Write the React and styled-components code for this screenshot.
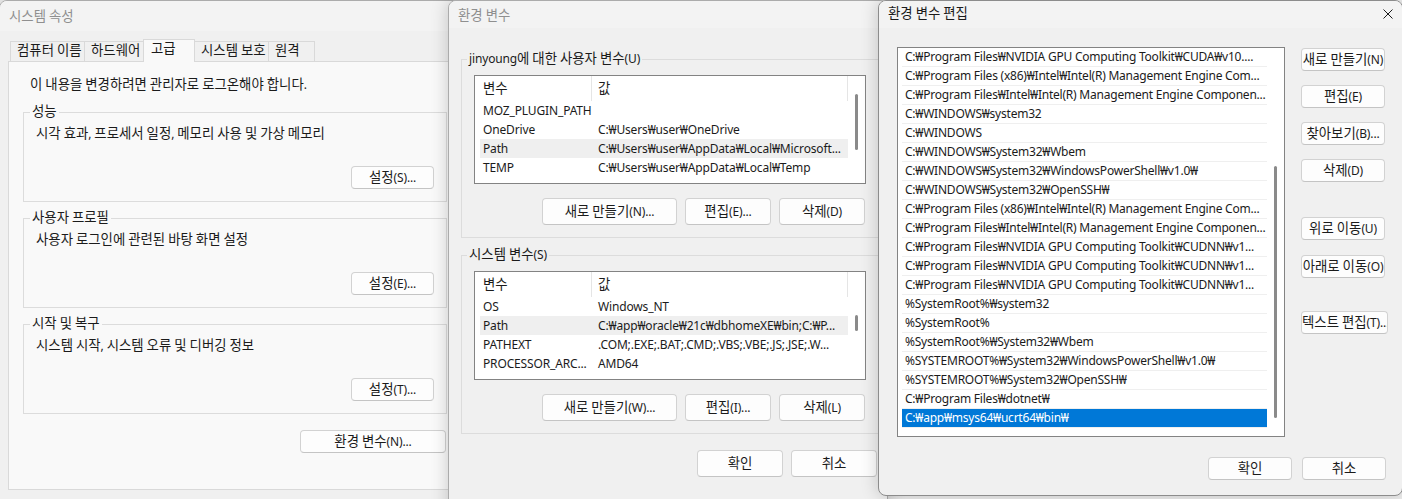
import styled, { createGlobalStyle } from "styled-components";

const GlobalStyle = createGlobalStyle`
  * { box-sizing: border-box; }
  body {
    margin: 0;
    background: #efefef;
    overflow: hidden;
    font-family: "Noto Sans", "Noto Sans CJK KR", sans-serif;
    font-size: 12px;
    letter-spacing: -0.15px;
    color: #1b1b1b;
  }
`;

// Malgun Gothic draws Hangul a bit larger than its Latin letters
const Hangul = styled.span`
  font-family: "Noto Sans CJK KR", sans-serif;
  font-size: 13.4px;
  line-height: 0;
  letter-spacing: 0;
`;

const ko = (text) =>
  text
    .split(/([\uAC00-\uD7A3]+(?:\s+[\uAC00-\uD7A3]+)*)/)
    .map((part, i) => (i % 2 ? <Hangul key={i}>{part}</Hangul> : part));

const Desktop = styled.div`
  position: relative;
  width: 1402px;
  height: 499px;
  overflow: hidden;
`;

const Window = styled.div`
  position: absolute;
  left: ${(p) => p.$x}px;
  top: 0;
  width: ${(p) => p.$w}px;
  height: ${(p) => p.$h}px;
  background: #f0f0f0;
  border: 1px solid ${(p) => (p.$active ? "#8c8c8c" : "#ababab")};
  border-radius: 8px;
  box-shadow: 0 0 18px rgba(0, 0, 0, 0.2);
  display: flex;
  flex-direction: column;
  overflow: hidden;
`;

const TitleBar = styled.div`
  flex: none;
  height: ${(p) => p.$h}px;
  display: flex;
  align-items: center;
  justify-content: space-between;
  padding: 0 ${(p) => p.$pr || 0}px 2px 9px;
  background: #f3f3f3;
  line-height: 16px;
  color: ${(p) => (p.$active ? "#1b1b1b" : "#8f8f8f")};
`;

const CloseIcon = () => (
  <svg width="10" height="10" viewBox="0 0 10 10">
    <path d="M0.5 0.5 L9.5 9.5 M9.5 0.5 L0.5 9.5" stroke="#1b1b1b" strokeWidth="1" fill="none" />
  </svg>
);

/* ---------- buttons ---------- */

const Button = styled.button`
  flex: none;
  width: ${(p) => p.$w}px;
  height: ${(p) => p.$h || 23}px;
  margin-top: ${(p) => p.$mt || 0}px;
  padding: 0;
  background: #fdfdfd;
  border: 1px solid #d2d2d2;
  border-bottom-color: #c4c4c4;
  border-radius: 4px;
  font: inherit;
  letter-spacing: inherit;
  line-height: 16px;
  color: #1b1b1b;
  white-space: nowrap;
  overflow: hidden;
`;

const ButtonRow = styled.div`
  display: flex;
  justify-content: flex-end;
  gap: ${(p) => p.$gap || 0}px;
  margin-top: ${(p) => p.$mt || 0}px;
  padding-right: ${(p) => p.$pr || 0}px;
  width: ${(p) => (p.$w ? `${p.$w}px` : "auto")};
`;

/* ---------- system properties ---------- */

const TabStrip = styled.div`
  display: flex;
  align-items: flex-end;
  height: 22px;
  margin-top: 8px;
  padding-left: 10px;
  position: relative;
  z-index: 1;
`;

const Tab = styled.div`
  width: ${(p) => p.$w}px;
  height: ${(p) => (p.$active ? 23 : 20)}px;
  margin-left: -1px;
  margin-bottom: ${(p) => (p.$active ? -1 : 0)}px;
  padding: 1px 0 0 ${(p) => (p.$active ? 7 : 6)}px;
  border: 1px solid #d9d9d9;
  border-bottom: none;
  background: ${(p) => (p.$active ? "#f9f9f9" : "#f0f0f0")};
  line-height: 16px;
  white-space: nowrap;
  &:first-child {
    margin-left: 0;
  }
`;

const TabPanel = styled.div`
  width: 452px;
  height: 429px;
  margin-left: 8px;
  padding: 15px 0 0 14px;
  background: #f9f9f9;
  border: 1px solid #d9d9d9;
`;

const Notice = styled.div`
  padding-left: 7px;
  line-height: 16px;
`;

const Group = styled.fieldset`
  width: ${(p) => p.$w}px;
  min-width: 0;
  margin: ${(p) => p.$mt}px 0 0;
  padding: ${(p) => p.$pad};
  border: 1px solid #dcdcdc;
`;

const Legend = styled.legend`
  padding: 0 2px;
  margin-left: ${(p) => p.$ml}px;
  line-height: 16px;
`;

const GroupText = styled.div`
  line-height: 16px;
`;

/* ---------- environment variables ---------- */

const DialogBody = styled.div`
  padding: ${(p) => p.$pad};
  display: flex;
  flex-direction: ${(p) => p.$dir || "column"};
  gap: ${(p) => p.$gap || 0}px;
`;

const ListView = styled.div`
  width: ${(p) => p.$w}px;
  height: ${(p) => p.$h}px;
  display: flex;
  background: #fff;
  border: 1px solid #838383;
  overflow: hidden;
`;

const ListMain = styled.div`
  flex: 1;
  padding-left: ${(p) => p.$pl}px;
  overflow: hidden;
`;

const ScrollTrack = styled.div`
  flex: none;
  width: 17px;
`;

const ScrollThumb = styled.div`
  width: 3px;
  height: ${(p) => p.$h}px;
  margin: ${(p) => p.$top}px 0 0 7px;
  border-radius: 2px;
  background: #8a8a8a;
`;

const VarGrid = styled.div`
  display: grid;
  grid-template-columns: 112px 1fr;
  height: ${(p) => (p.$header ? 25 : 19)}px;
  line-height: ${(p) => (p.$header ? 25 : 19)}px;
  background: ${(p) => (p.$sel ? "#efefef" : "transparent")};
`;

const VarCell = styled.div`
  padding-left: ${(p) => (p.$value ? 6 : 3)}px;
  white-space: nowrap;
  overflow: hidden;
  border-right: ${(p) => (p.$header ? "1px solid #e5e5e5" : "none")};
`;

/* ---------- edit variable ---------- */

const PathRow = styled.div`
  height: 19px;
  padding-left: 3px;
  line-height: 18px;
  letter-spacing: -0.22px;
  border-bottom: 1px solid #efefef;
  white-space: nowrap;
  overflow: hidden;
  background: ${(p) => (p.$sel ? "#0078d7" : "transparent")};
  color: ${(p) => (p.$sel ? "#fff" : "inherit")};
`;

const SideButtons = styled.div`
  display: flex;
  flex-direction: column;
`;

const userVars = [
  ["MOZ_PLUGIN_PATH", ""],
  ["OneDrive", "C:₩Users₩user₩OneDrive"],
  ["Path", "C:₩Users₩user₩AppData₩Local₩Microsoft...", true],
  ["TEMP", "C:₩Users₩user₩AppData₩Local₩Temp"],
];

const systemVars = [
  ["OS", "Windows_NT"],
  ["Path", "C:₩app₩oracle₩21c₩dbhomeXE₩bin;C:₩P...", true],
  ["PATHEXT", ".COM;.EXE;.BAT;.CMD;.VBS;.VBE;.JS;.JSE;.W..."],
  ["PROCESSOR_ARC...", "AMD64"],
];

const paths = [
  "C:₩Program Files₩NVIDIA GPU Computing Toolkit₩CUDA₩v10....",
  "C:₩Program Files (x86)₩Intel₩Intel(R) Management Engine Com...",
  "C:₩Program Files₩Intel₩Intel(R) Management Engine Componen...",
  "C:₩WINDOWS₩system32",
  "C:₩WINDOWS",
  "C:₩WINDOWS₩System32₩Wbem",
  "C:₩WINDOWS₩System32₩WindowsPowerShell₩v1.0₩",
  "C:₩WINDOWS₩System32₩OpenSSH₩",
  "C:₩Program Files (x86)₩Intel₩Intel(R) Management Engine Com...",
  "C:₩Program Files₩Intel₩Intel(R) Management Engine Componen...",
  "C:₩Program Files₩NVIDIA GPU Computing Toolkit₩CUDNN₩v1...",
  "C:₩Program Files₩NVIDIA GPU Computing Toolkit₩CUDNN₩v1...",
  "C:₩Program Files₩NVIDIA GPU Computing Toolkit₩CUDNN₩v1...",
  "%SystemRoot%₩system32",
  "%SystemRoot%",
  "%SystemRoot%₩System32₩Wbem",
  "%SYSTEMROOT%₩System32₩WindowsPowerShell₩v1.0₩",
  "%SYSTEMROOT%₩System32₩OpenSSH₩",
  "C:₩Program Files₩dotnet₩",
  "C:₩app₩msys64₩ucrt64₩bin₩",
];

const tabs = [
  ["컴퓨터 이름", 75],
  ["하드웨어", 60],
  ["고급", 52, true],
  ["시스템 보호", 75],
  ["원격", 47],
];

const perfGroups = [
  ["성능", "시각 효과, 프로세서 일정, 메모리 사용 및 가상 메모리", "설정(S)...", 11],
  ["사용자 프로필", "사용자 로그인에 관련된 바탕 화면 설정", "설정(E)...", 8],
  ["시작 및 복구", "시스템 시작, 시스템 오류 및 디버깅 정보", "설정(T)...", 8],
];

const sideButtons = [
  ["새로 만들기(N)", 1, 84],
  ["편집(E)", 14, 84],
  ["찾아보기(B)...", 14, 84],
  ["삭제(D)", 14, 84],
  ["위로 이동(U)", 35, 84],
  ["아래로 이동(O)", 15, 84],
  ["텍스트 편집(T)...", 33, 87],
];

const VarList = ({ rows, thumbTop, thumbH }) => (
  <ListView $w={392} $h={109}>
    <ListMain $pl={5}>
      <VarGrid $header>
        <VarCell $header>{ko("변수")}</VarCell>
        <VarCell $header $value>
          {ko("값")}
        </VarCell>
      </VarGrid>
      {rows.map(([name, value, sel]) => (
        <VarGrid key={name} $sel={sel}>
          <VarCell>{name}</VarCell>
          <VarCell $value>{value}</VarCell>
        </VarGrid>
      ))}
    </ListMain>
    <ScrollTrack>
      <ScrollThumb $top={thumbTop} $h={thumbH} />
    </ScrollTrack>
  </ListView>
);

const VarGroup = ({ title, mt, rows, thumbTop, thumbH, labels }) => (
  <Group $w={420} $mt={mt} $pad="8px 14px 12px 12px">
    <Legend $ml={-7}>{ko(title)}</Legend>
    <VarList rows={rows} thumbTop={thumbTop} thumbH={thumbH} />
    <ButtonRow $gap={8} $mt={14} $pr={1}>
      <Button $w={135} $h={27}>
        {ko(labels[0])}
      </Button>
      <Button $w={86} $h={27}>
        {ko(labels[1])}
      </Button>
      <Button $w={86} $h={27}>
        {ko(labels[2])}
      </Button>
    </ButtonRow>
  </Group>
);

export default function App() {
  return (
    <>
      <GlobalStyle />
      <Desktop>
        <Window $x={-1} $w={470} $h={540}>
          <TitleBar $h={30}>{ko("시스템 속성")}</TitleBar>
          <TabStrip>
            {tabs.map(([label, w, active]) => (
              <Tab key={label} $w={w} $active={active}>
                {ko(label)}
              </Tab>
            ))}
          </TabStrip>
          <TabPanel>
            <Notice>{ko("이 내용을 변경하려면 관리자로 로그온해야 합니다.")}</Notice>
            {perfGroups.map(([title, text, btn, mt]) => (
              <Group key={title} $w={424} $mt={mt} $pad="6px 12px 12px">
                <Legend $ml={-6}>{ko(title)}</Legend>
                <GroupText>{ko(text)}</GroupText>
                <ButtonRow $mt={24}>
                  <Button $w={83}>{ko(btn)}</Button>
                </ButtonRow>
              </Group>
            ))}
            <ButtonRow $mt={16} $pr={1} $w={424}>
              <Button $w={146}>{ko("환경 변수(N)...")}</Button>
            </ButtonRow>
          </TabPanel>
        </Window>

        <Window $x={448} $w={440} $h={540}>
          <TitleBar $h={27}>{ko("환경 변수")}</TitleBar>
          <DialogBody $pad="0 0 0 12px">
            <VarGroup
              title="jinyoung에 대한 사용자 변수(U)"
              mt={23}
              rows={userVars}
              thumbTop={18}
              thumbH={56}
              labels={["새로 만들기(N)...", "편집(E)...", "삭제(D)"]}
            />
            <VarGroup
              title="시스템 변수(S)"
              mt={9}
              rows={systemVars}
              thumbTop={43}
              thumbH={16}
              labels={["새로 만들기(W)...", "편집(I)...", "삭제(L)"]}
            />
            <ButtonRow $gap={8} $mt={16} $pr={10}>
              <Button $w={86} $h={27}>
                {ko("확인")}
              </Button>
              <Button $w={86} $h={27}>
                {ko("취소")}
              </Button>
            </ButtonRow>
          </DialogBody>
        </Window>

        <Window $x={878} $w={525} $h={496} $active>
          <TitleBar $h={27} $pr={9} $active>
            <span>{ko("환경 변수 편집")}</span>
            <CloseIcon />
          </TitleBar>
          <DialogBody $pad="19px 0 0 18px" $dir="row" $gap={16}>
            <ListView $w={388} $h={390}>
              <ListMain $pl={4}>
                {paths.map((p, i) => (
                  <PathRow key={i} $sel={i === paths.length - 1}>
                    {p}
                  </PathRow>
                ))}
              </ListMain>
              <ScrollTrack>
                <ScrollThumb $top={118} $h={252} />
              </ScrollTrack>
            </ListView>
            <SideButtons>
              {sideButtons.map(([label, mt, w]) => (
                <Button key={label} $w={w} $mt={mt}>
                  {ko(label)}
                </Button>
              ))}
            </SideButtons>
          </DialogBody>
          <ButtonRow $gap={10} $mt={20} $pr={16}>
            <Button $w={84}>{ko("확인")}</Button>
            <Button $w={84}>{ko("취소")}</Button>
          </ButtonRow>
        </Window>
      </Desktop>
    </>
  );
}
